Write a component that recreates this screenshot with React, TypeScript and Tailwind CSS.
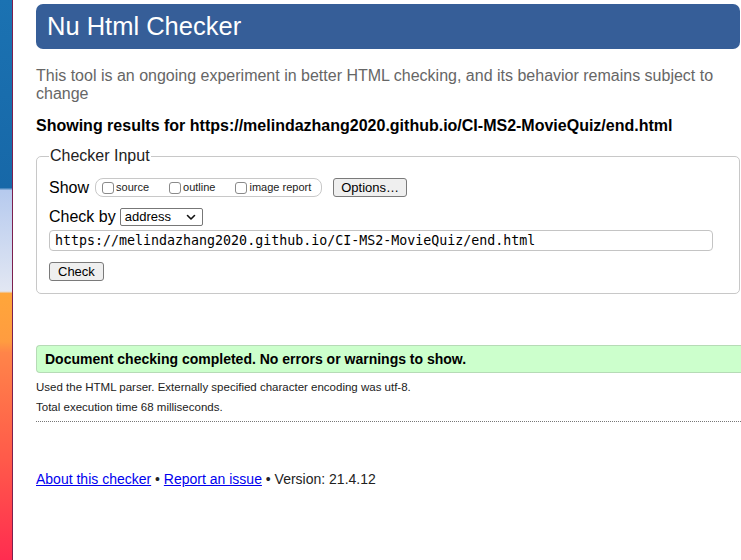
import React from "react";

const sans = { fontFamily: '"Liberation Sans", Arial, sans-serif' };

function Checkbox({ label }: { label: string }) {
  return (
    <label className="flex items-center gap-[2px] mr-[20px] last:mr-0">
      <span className="inline-block w-[12px] h-[12px] rounded-[3px] border border-[#8a8a8a] bg-white" />
      <span className="text-[11px] text-[#222]">{label}</span>
    </label>
  );
}

export default function App() {
  return (
    <div className="flex h-[560px] w-[741px] overflow-hidden bg-white text-black" style={sans}>
      {/* desktop wallpaper peeking at the left */}
      <div className="w-[12px] shrink-0 bg-[linear-gradient(to_bottom,#1b72b2_0%,#1768a8_33.5%,#b6caee_34%,#e2e7f3_52%,#ffa63a_52.4%,#ff9c40_61%,#ff8449_63%,#ff5a4a_82%,#ff2c50_100%)]" />
      <div className="w-px shrink-0 bg-[#7c1f4f]" />

      <div className="flex-1 pl-[23px] pt-[4px]">
        <h1 className="mr-px h-[45px] rounded-[7px] bg-[#365e98] pl-[11px] text-[25.5px] leading-[45px] text-white">
          Nu Html Checker
        </h1>

        <p className="mt-[18px] text-[16px] leading-[18px] text-[#666]">
          This tool is an ongoing experiment in better HTML checking, and its behavior remains subject to change
        </p>

        <p className="mt-[14px] text-[16px] font-bold leading-[18px]">
          Showing results for https://melindazhang2020.github.io/CI-MS2-MovieQuiz/end.html
        </p>

        <fieldset className="mt-[12px] mr-px rounded-[5px] border border-[#c8c8c8] px-[12px] pb-[12px]">
          <legend className="px-px text-[16px] leading-[18px] text-[#222]">Checker Input</legend>

          <div className="mt-[13px] flex items-center">
            <span className="text-[16px] leading-[18px]">Show</span>
            <div className="ml-[6px] flex h-[19px] items-center rounded-[8px] border border-[#c8c8c8] pl-[6px] pr-[10px]">
              <Checkbox label="source" />
              <Checkbox label="outline" />
              <Checkbox label="image report" />
            </div>
            <button className="ml-[11px] h-[19px] rounded-[3px] border border-[#7a7a7a] bg-[#efefef] px-[7px] text-[13px] leading-[17px]">
              Options…
            </button>
          </div>

          <div className="mt-[11px] flex items-center">
            <span className="text-[16px] leading-[18px]">Check by</span>
            <div className="ml-[4px] flex h-[18px] w-[83px] items-center justify-between rounded-[2px] border border-[#777] bg-white pl-[4px] pr-[6px]">
              <span className="text-[13px] leading-[16px]">address</span>
              <svg width="10" height="7" viewBox="0 0 10 7">
                <path d="M1.5 1.5 L5 5 L8.5 1.5" fill="none" stroke="#111" strokeWidth="1.6" strokeLinecap="round" strokeLinejoin="round" />
              </svg>
            </div>
          </div>

          <div
            className="mt-[4px] mr-[14px] flex h-[21px] items-center rounded-[4px] border border-[#c4c4c4] px-[5px] text-[13.3px]"
            style={{ fontFamily: '"DejaVu Sans Mono", "Liberation Mono", monospace' }}
          >
            https://melindazhang2020.github.io/CI-MS2-MovieQuiz/end.html
          </div>

          <button className="mt-[11px] block h-[19px] rounded-[3px] border border-[#7a7a7a] bg-[#efefef] px-[8px] text-[13px] leading-[17px]">
            Check
          </button>
        </fieldset>

        <div className="mt-[51px] flex h-[28px] items-center rounded-l-[4px] border border-r-0 border-[#b6dbb6] bg-[#ccffcc] pl-[8px] text-[14px] font-bold">
          Document checking completed. No errors or warnings to show.
        </div>

        <p className="mt-[8px] text-[11.5px] leading-[13px] text-[#222]">
          Used the HTML parser. Externally specified character encoding was utf-8.
        </p>
        <p className="mt-[7px] text-[11.5px] leading-[13px] text-[#222]">
          Total execution time 68 milliseconds.
        </p>
        <div className="mt-[7px] border-t border-dotted border-[#777]" />

        <p className="mt-[49px] text-[14px] leading-[16px] text-[#222]">
          <a href="#" className="text-[#0000ee] underline">About this checker</a>
          {" • "}
          <a href="#" className="text-[#0000ee] underline">Report an issue</a>
          {" • Version: 21.4.12"}
        </p>
      </div>
    </div>
  );
}
